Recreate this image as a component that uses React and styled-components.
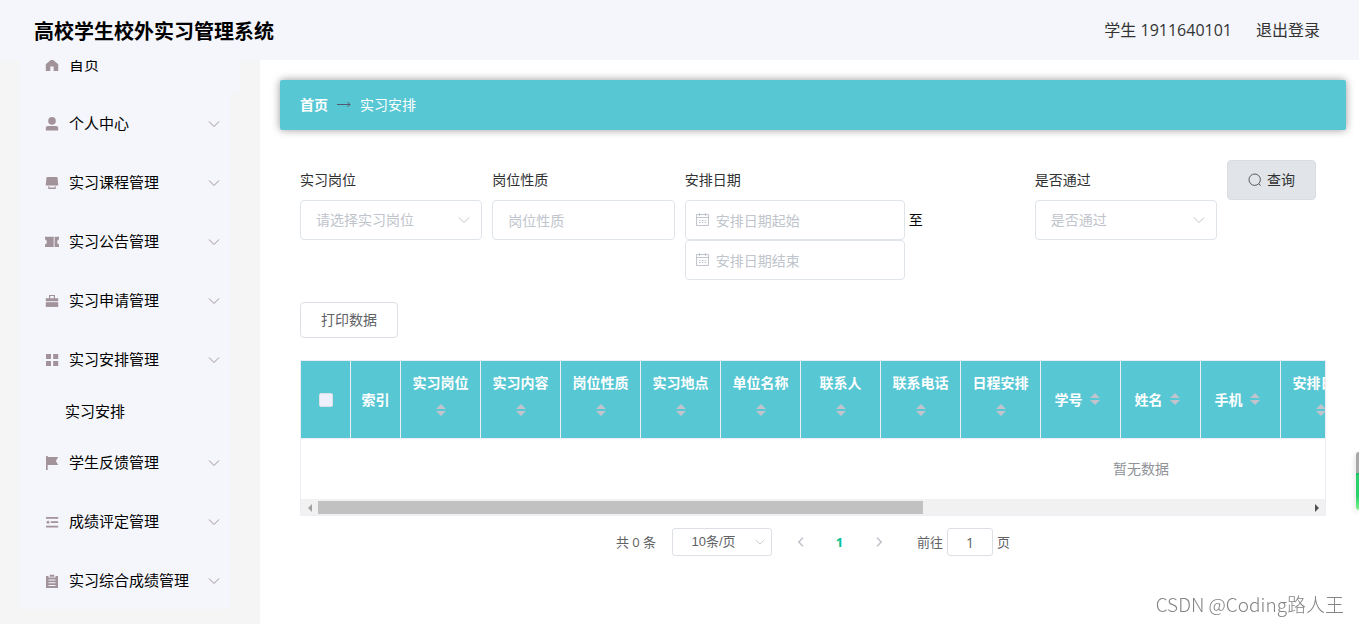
import React, { useRef, useState } from 'react';
import styled, { createGlobalStyle, css } from 'styled-components';

const GlobalStyle = createGlobalStyle`
  * {
    box-sizing: border-box;
  }

  body {
    margin: 0;
    overflow: hidden;
    color: #303133;
    font-family: 'Open Sans', 'Noto Sans CJK SC', sans-serif;
    font-size: 14px;
    line-height: 20px;
  }

  button,
  input,
  select {
    font-family: inherit;
    line-height: 20px;
  }
`;

const Page = styled.div`
  display: flex;
  flex-direction: column;
  height: 100vh;
`;

const Header = styled.header`
  display: flex;
  flex: none;
  align-items: center;
  justify-content: space-between;
  height: 60px;
  padding: 0 39px 0 34px;
  background: #f4f6fb;
`;

const Title = styled.h1`
  margin: 0;
  color: #000;
  font-size: 20px;
  font-weight: bold;
  line-height: normal;
`;

const UserBox = styled.div`
  display: flex;
  gap: 24px;
  color: #333;
  font-size: 16px;

  a {
    color: inherit;
    text-decoration: none;
  }
`;

const Body = styled.div`
  display: flex;
  flex: 1;
  min-height: 0;
`;

const Aside = styled.aside`
  display: flex;
  flex: none;
  flex-direction: column;
  justify-content: flex-end;
  width: 260px;
  padding: 0 30px 15px 20px;
  background: #f5f5f5;
  overflow: hidden;
`;

const Menu = styled.ul`
  display: flex;
  flex: none;
  flex-direction: column;
  gap: 3px;
  margin: 0;
  padding: 0;
  list-style: none;
  background: #f4f6fb;
`;

const MenuLink = styled.a`
  display: flex;
  align-items: center;
  gap: 9px;
  height: 56px;
  padding: 0 10px 0 24px;
  background: #f4f6fb;
  color: #000;
  font-size: 15px;
  text-decoration: none;
  ${(props) =>
    props.$wide &&
    css`
      width: 220px;
    `}

  span {
    flex: 1;
    padding-bottom: 2px;
    white-space: nowrap;
  }

  svg {
    flex: none;
    color: #a29299;
  }
`;

const SubLink = styled.a`
  display: flex;
  align-items: center;
  height: 41px;
  margin-top: 3px;
  padding: 0 0 2px 45px;
  color: #000;
  font-size: 15px;
  text-decoration: none;
`;

const Main = styled.main`
  flex: 1;
  min-width: 0;
  padding: 20px 13px 0 20px;
  background: #fff;
`;

const Breadcrumb = styled.nav`
  display: flex;
  align-items: center;
  gap: 9px;
  height: 50px;
  padding: 0 20px;
  border-radius: 2px;
  background: #57c7d4;
  box-shadow: 0 0 8px rgba(0, 0, 0, 0.4);
  color: #fff;

  a {
    color: #fff;
    font-weight: bold;
    text-decoration: none;
  }

  svg {
    color: #515a6e;
  }
`;

const Content = styled.section`
  padding: 30px 20px 0;
`;

const FilterForm = styled.form`
  display: grid;
  grid-template-columns: 1fr 1fr 340px 1fr 99px;
  gap: 10px;
  align-items: start;
`;

const Field = styled.div`
  > label {
    display: block;
    line-height: 40px;
  }
`;

const DateRange = styled.div`
  display: flex;
  flex-wrap: wrap;
  align-items: center;
  column-gap: 4px;
  color: #000;
`;

const Control = styled.div`
  position: relative;
  width: ${(props) => props.$width || '100%'};

  svg {
    position: absolute;
    top: 0;
    bottom: 0;
    ${(props) => (props.$iconLeft ? 'left: 11px;' : 'right: 12px;')}
    margin: auto 0;
    color: #c0c4cc;
    pointer-events: none;
  }
`;

const fieldStyle = css`
  display: block;
  width: 100%;
  height: 40px;
  padding: 0 15px;
  border: 1px solid #dfe4ea;
  border-radius: 4px;
  background: #fff;
  font-size: 14px;
  outline: none;
`;

const TextInput = styled.input`
  ${fieldStyle}
  color: #606266;
  ${(props) =>
    props.$iconLeft &&
    css`
      padding-left: 30px;
    `}

  &::placeholder {
    color: #c0c4cc;
    opacity: 1;
  }
`;

const Select = styled.select`
  ${fieldStyle}
  appearance: none;
  color: #c0c4cc;
`;

const SearchButton = styled.button`
  display: flex;
  align-items: center;
  justify-content: center;
  gap: 5px;
  width: 89px;
  height: 40px;
  padding: 0;
  border: 1px solid #dadde2;
  border-radius: 4px;
  background: #e1e5e9;
  color: #303133;
  font-size: 14px;
  cursor: pointer;

  svg {
    color: #55585e;
  }
`;

const PrintButton = styled.button`
  display: block;
  height: 36px;
  margin: 22px 0;
  padding: 0 20px;
  border: 1px solid #dcdfe6;
  border-radius: 4px;
  background: #fff;
  color: #606266;
  font-size: 14px;
  cursor: pointer;
`;

const TableBox = styled.div`
  border: 1px solid #ebeef5;
`;

const TableScroll = styled.div`
  overflow: hidden;
`;

const Table = styled.table`
  width: 1680px;
  border-collapse: separate;
  border-spacing: 0;
  table-layout: fixed;

  th {
    height: 78px;
    padding: 0;
    border-right: 1px solid #ebeef5;
    border-bottom: 1px solid #ebeef5;
    background: #57c7d4;
    color: #fff;
    font-weight: bold;
  }

  td {
    height: 60px;
    padding: 0;
    color: #909399;
    text-align: center;
  }
`;

const HeadCell = styled.div`
  display: flex;
  flex-wrap: wrap;
  align-items: center;
  justify-content: center;
  padding: 0 10px;
  line-height: 23px;
`;

const SortButton = styled.button`
  display: flex;
  align-items: center;
  justify-content: center;
  width: 24px;
  height: 34px;
  padding: 0 0 2px;
  border: 0;
  background: none;
  color: #c0c4cc;
  cursor: pointer;
`;

const CheckBox = styled.input`
  display: block;
  appearance: none;
  width: 14px;
  height: 14px;
  margin: 0 auto;
  border: 1px solid #dcdfe6;
  border-radius: 2px;
  background: #eef1fc;
`;

const ScrollBar = styled.div`
  display: flex;
  height: 16px;
  padding: 2px 0 1px;
  background: #f1f1f1;
`;

const ScrollArrow = styled.button`
  display: flex;
  flex: none;
  align-items: center;
  justify-content: center;
  width: 17px;
  padding: 0;
  border: 0;
  background: none;
  color: ${(props) => (props.disabled ? '#a3a3a3' : '#505050')};
`;

const ScrollTrack = styled.div`
  flex: 1;
`;

const ScrollThumb = styled.div`
  width: 61.1%;
  height: 100%;
  background: #c1c1c1;
`;

const Pagination = styled.div`
  display: flex;
  align-items: center;
  justify-content: center;
  padding-top: 12px;
  color: #606266;
  font-size: 13px;
`;

const SizeBox = styled(Control)`
  width: 100px;
  margin: 0 9px 0 16px;

  svg {
    right: 7px;
  }
`;

const SizeSelect = styled.select`
  display: block;
  width: 100%;
  height: 28px;
  padding: 0 25px 0 8px;
  border: 1px solid #dcdfe6;
  border-radius: 3px;
  appearance: none;
  background: #fff;
  color: #606266;
  font-family: 'Liberation Sans', 'Noto Sans CJK SC', sans-serif;
  font-size: 13px;
  text-align: center;
  text-align-last: center;
`;

const PageButton = styled.button`
  display: flex;
  align-items: center;
  justify-content: center;
  width: 39px;
  height: 28px;
  padding: 0;
  border: 0;
  background: none;
  color: ${(props) => (props.$active ? '#00c292' : '#c0c4cc')};
  font-size: 13px;
  font-weight: bold;
`;

const JumpBox = styled.label`
  display: flex;
  align-items: center;
  gap: 4px;
  margin-left: 19px;
`;

const JumpInput = styled.input`
  width: 46px;
  height: 28px;
  padding: 0;
  border: 1px solid #dcdfe6;
  border-radius: 3px;
  color: #606266;
  font-size: 14px;
  text-align: center;
`;

const SideGauge = styled.div`
  position: fixed;
  right: 0;
  top: 452px;
  width: 3px;
  height: 58px;
  border-radius: 3px 0 0 3px;
  background: linear-gradient(#a8a8a8 0 21px, #14b85c 21px, #2bcf6c 24px, #2bcf6c 44px, #7df587);
  box-shadow: 0 2px 6px rgba(0, 0, 0, 0.2);
`;

const Signature = styled.div`
  position: fixed;
  right: 15px;
  bottom: 6px;
  color: #858585;
  font-family: 'Noto Sans CJK SC', sans-serif;
  font-size: 19px;
  font-weight: 300;
  line-height: 28px;
`;

const ICONS = {
  home: <path d="M1.8 7.3 8 2l6.2 5.3V14H9.6V9.4H6.3V14H1.8z" />,
  user: (
    <>
      <circle cx="8" cy="4.9" r="3.8" />
      <path d="M1.8 14.6V12c0-1.2.9-2 2.1-2h8.2c1.2 0 2.1.8 2.1 2v2.6z" />
    </>
  ),
  course: (
    <>
      <path d="M3 2h10l.5.5.8 8.1H1.7l.8-8.1z" />
      <path d="M4.3 11.2h1.1v1.4h5.2v-1.4h1.1v2.9H4.3z" />
    </>
  ),
  ticket: (
    <>
      <path d="M1 2.7h8.7v10.400H1v-2.500a2.700 2.700 0 0 0 1.800-2.700A2.700 2.700 0 0 0 1 5.200z" />
      <path d="M10.600 2.700H15v2.500a2.700 2.700 0 0 0-1.800 2.700 2.700 2.700 0 0 0 1.800 2.700v2.500h-4.400z" />
    </>
  ),
  briefcase: (
    <>
      <path d="M5 2h6v3.300h3.200v2.900H1.800V5.300H5zm1.200 1.100v2.200h3.600V3.100z" fillRule="evenodd" />
      <path d="M1.800 9.200h12.400v4.700H1.800z" />
    </>
  ),
  grid: <path d="M2 2h5v5H2zM9.200 2h5v5h-5zM2 9h5v5H2zM9.200 9h5v5h-5z" />,
  flag: <path d="M2 1h1.700v1h10.500l-2.300 4 2.300 4H3.700v5H2z" />,
  list: (
    <path d="M2 3h12.200v1.700H2zM2 11.700h12.200v1.700H2zM6.800 7.300h7.400V9H6.800zM2 8.200l2.500-2v1.200h1V9h-1v1.200z" />
  ),
  clipboard: (
    <path
      d="M2 3h2.500v1.500h7V3H14v12H2zM5.800 1.700h4.400v2H5.800zM4.500 6.500v1h7v-1zM4.500 9.200v1h7v-1zM4.500 11.900v1h7v-1z"
      fillRule="evenodd"
    />
  ),
};

const MenuIcon = ({ name }) => (
  <svg width="16" height="16" viewBox="0 0 16 16" fill="currentColor" aria-hidden="true">
    {ICONS[name]}
  </svg>
);

const ArrowDown = ({ size = 12 }) => (
  <svg width={size} height={size} viewBox="0 0 12 12" fill="none" stroke="currentColor" aria-hidden="true">
    <path d="M1 3.5 6 8.5l5-5" />
  </svg>
);

const CalendarIcon = () => (
  <svg width="14" height="14" viewBox="0 0 14 14" fill="none" stroke="currentColor" aria-hidden="true">
    <path d="M.5 1.5h12v11H.5zM.5 4.5h12M3.5 0v3M9.5 0v3" />
    <path d="M3 7.5h1.6M5.8 7.5h1.6M8.6 7.5h1.6M3 9.5h1.6M5.8 9.5h1.6M8.6 9.5h1.6" />
  </svg>
);

const menus = [
  { icon: 'home', text: '首页', wide: true },
  { icon: 'user', text: '个人中心', arrow: true },
  { icon: 'course', text: '实习课程管理', arrow: true },
  { icon: 'ticket', text: '实习公告管理', arrow: true },
  { icon: 'briefcase', text: '实习申请管理', arrow: true },
  { icon: 'grid', text: '实习安排管理', arrow: true, children: ['实习安排'] },
  { icon: 'flag', text: '学生反馈管理', arrow: true },
  { icon: 'list', text: '成绩评定管理', arrow: true },
  { icon: 'clipboard', text: '实习综合成绩管理', arrow: true },
];

const columns = [
  '实习岗位',
  '实习内容',
  '岗位性质',
  '实习地点',
  '单位名称',
  '联系人',
  '联系电话',
  '日程安排',
  '学号',
  '姓名',
  '手机',
  '安排日期',
  '是否通过',
];

const Sidebar = () => (
  <Aside>
    <Menu>
      {menus.map((menu) => (
        <li key={menu.text}>
          <MenuLink href="#" $wide={menu.wide}>
            <MenuIcon name={menu.icon} />
            <span>{menu.text}</span>
            {menu.arrow && <ArrowDown />}
          </MenuLink>
          {menu.children &&
            menu.children.map((child) => (
              <SubLink href="#" key={child}>
                {child}
              </SubLink>
            ))}
        </li>
      ))}
    </Menu>
  </Aside>
);

const Filters = () => (
  <FilterForm onSubmit={(e) => e.preventDefault()}>
    <Field>
      <label htmlFor="post">实习岗位</label>
      <Control>
        <Select id="post">
          <option>请选择实习岗位</option>
        </Select>
        <ArrowDown />
      </Control>
    </Field>
    <Field>
      <label htmlFor="nature">岗位性质</label>
      <TextInput id="nature" placeholder="岗位性质" />
    </Field>
    <Field>
      <label htmlFor="start">安排日期</label>
      <DateRange>
        <Control $width="220px" $iconLeft>
          <TextInput id="start" placeholder="安排日期起始" $iconLeft />
          <CalendarIcon />
        </Control>
        至
        <Control $width="220px" $iconLeft>
          <TextInput aria-label="安排日期结束" placeholder="安排日期结束" $iconLeft />
          <CalendarIcon />
        </Control>
      </DateRange>
    </Field>
    <Field>
      <label htmlFor="pass">是否通过</label>
      <Control>
        <Select id="pass">
          <option>是否通过</option>
        </Select>
        <ArrowDown />
      </Control>
    </Field>
    <SearchButton type="submit">
      <svg width="14" height="14" viewBox="0 0 14 14" fill="none" stroke="currentColor" aria-hidden="true">
        <circle cx="6.7" cy="6.7" r="5.7" />
        <path d="m10.7 10.7 2 2" />
      </svg>
      查询
    </SearchButton>
  </FilterForm>
);

const DataTable = () => {
  const scrollRef = useRef(null);
  const [left, setLeft] = useState(0);

  const move = (step) => {
    const el = scrollRef.current;
    el.scrollLeft += step;
    setLeft(el.scrollLeft);
  };

  return (
    <TableBox>
      <TableScroll ref={scrollRef}>
        <Table>
          <colgroup>
            <col width="50" />
            <col width="50" />
            {columns.map((name) => (
              <col key={name} width="80" />
            ))}
            <col />
          </colgroup>
          <thead>
            <tr>
              <th>
                <CheckBox type="checkbox" aria-label="全选" />
              </th>
              <th>索引</th>
              {columns.map((name) => (
                <th key={name}>
                  <HeadCell>
                    {name}
                    <SortButton aria-label={`${name}排序`}>
                      <svg width="10" height="12" viewBox="0 0 10 12" fill="currentColor">
                        <path d="M0 5l5-5 5 5zM0 7h10l-5 5z" />
                      </svg>
                    </SortButton>
                  </HeadCell>
                </th>
              ))}
              <th>操作</th>
            </tr>
          </thead>
          <tbody>
            <tr>
              <td colSpan={columns.length + 3}>暂无数据</td>
            </tr>
          </tbody>
        </Table>
      </TableScroll>
      <ScrollBar>
        <ScrollArrow aria-label="向左" disabled={left === 0} onClick={() => move(-80)}>
          <svg width="4" height="8" viewBox="0 0 4 8" fill="currentColor">
            <path d="M4 0v8L0 4z" />
          </svg>
        </ScrollArrow>
        <ScrollTrack>
          <ScrollThumb style={{ marginLeft: `${(left / 1680) * 100}%` }} />
        </ScrollTrack>
        <ScrollArrow aria-label="向右" onClick={() => move(80)}>
          <svg width="4" height="8" viewBox="0 0 4 8" fill="currentColor">
            <path d="M0 0v8l4-4z" />
          </svg>
        </ScrollArrow>
      </ScrollBar>
    </TableBox>
  );
};

const Pager = () => (
  <Pagination>
    <span>共 0 条</span>
    <SizeBox>
      <SizeSelect aria-label="每页条数">
        <option>10条/页</option>
      </SizeSelect>
      <ArrowDown size={10} />
    </SizeBox>
    <PageButton aria-label="上一页">
      <svg width="8" height="10" viewBox="0 0 8 10" fill="none" stroke="currentColor" strokeWidth="1.6">
        <path d="M6 .8 1.8 5 6 9.2" />
      </svg>
    </PageButton>
    <PageButton $active>1</PageButton>
    <PageButton aria-label="下一页">
      <svg width="8" height="10" viewBox="0 0 8 10" fill="none" stroke="currentColor" strokeWidth="1.6">
        <path d="M2 .8 6.2 5 2 9.2" />
      </svg>
    </PageButton>
    <JumpBox>
      前往
      <JumpInput defaultValue="1" />
      页
    </JumpBox>
  </Pagination>
);

const App = () => (
  <Page>
    <GlobalStyle />
    <Header>
      <Title>高校学生校外实习管理系统</Title>
      <UserBox>
        <span>学生 1911640101</span>
        <a href="#">退出登录</a>
      </UserBox>
    </Header>
    <Body>
      <Sidebar />
      <Main>
        <Breadcrumb>
          <a href="#">首页</a>
          <svg width="14" height="8" viewBox="0 0 14 8" fill="none" stroke="currentColor" aria-hidden="true">
            <path d="M0 3.5h13M10.5 1l2.5 2.5L10.5 6" />
          </svg>
          <span>实习安排</span>
        </Breadcrumb>
        <Content>
          <Filters />
          <PrintButton>打印数据</PrintButton>
          <DataTable />
          <Pager />
        </Content>
      </Main>
    </Body>
    <SideGauge />
    <Signature>CSDN @Coding路人王</Signature>
  </Page>
);

export default App;
